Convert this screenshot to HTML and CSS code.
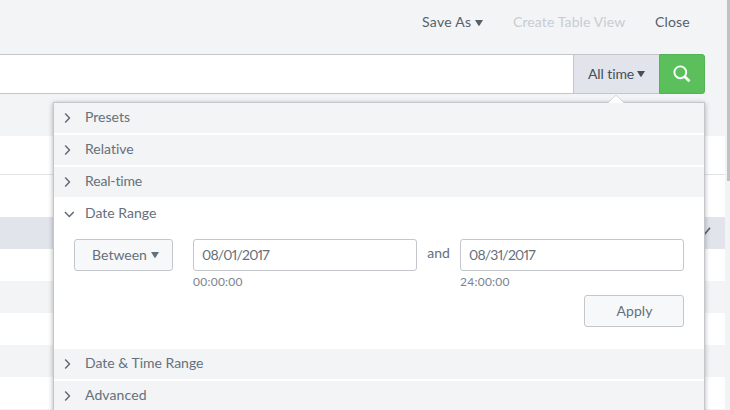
FILE: index.html
```html
<!DOCTYPE html>
<html lang="en">
<head>
<meta charset="utf-8">
<title>Search</title>
<link rel="stylesheet" href="styles.css">
</head>
<body>
<div class="page">
  <main class="content">
    <nav class="actions">
      <a class="save">Save As<svg class="caret" viewBox="0 0 8 6"><path d="M0 0h8L4.6 5.4q-.6.8-1.2 0z"/></svg></a>
      <a class="create">Create Table View</a>
      <a class="close">Close</a>
    </nav>
    <div class="search">
      <div class="query"></div>
      <div class="time">
        <span>All time</span><svg class="caret" viewBox="0 0 8 6"><path d="M0 0h8L4.6 5.4q-.6.8-1.2 0z"/></svg>
        <section class="popover">
          <svg class="tip" viewBox="0 0 16 8"><path d="M0 8L6.5 1.3q1.5-1.5 3 0L16 8" fill="#fff" stroke="#c3c7cc" stroke-width=".7"/></svg>
          <div class="head"><svg class="chev" viewBox="0 0 10 10"><path d="M1.2.5L5.5 5 1.2 9.5"/></svg><span>Presets</span></div>
          <div class="head"><svg class="chev" viewBox="0 0 10 10"><path d="M1.2.5L5.5 5 1.2 9.5"/></svg><span>Relative</span></div>
          <div class="head"><svg class="chev" viewBox="0 0 10 10"><path d="M1.2.5L5.5 5 1.2 9.5"/></svg><span class="realtime">Real-time</span></div>
          <div class="head open"><svg class="chev" viewBox="0 0 10 10"><path d="M.9 3L5.3 7.4 9.7 3"/></svg><span class="range">Date Range</span></div>
          <div class="body">
            <div class="fields">
              <div class="button between"><span>Between</span><svg class="caret" viewBox="0 0 8 6"><path d="M0 0h8L4.6 5.4q-.6.8-1.2 0z"/></svg></div>
              <div class="field"><div class="input">08/01/2017</div><div class="hint">00:00:00</div></div>
              <div class="and">and</div>
              <div class="field"><div class="input">08/31/2017</div><div class="hint">24:00:00</div></div>
            </div>
            <div class="button apply"><span>Apply</span></div>
          </div>
          <div class="head"><svg class="chev" viewBox="0 0 10 10"><path d="M1.2.5L5.5 5 1.2 9.5"/></svg><span class="datetime">Date &amp; Time Range</span></div>
          <div class="head"><svg class="chev" viewBox="0 0 10 10"><path d="M1.2.5L5.5 5 1.2 9.5"/></svg><span class="advanced">Advanced</span></div>
        </section>
      </div>
      <div class="go"><svg viewBox="0 0 18 18"><circle cx="7.3" cy="7.3" r="5.9"/><path d="M11.8 11.8l4.7 4.5" stroke-width="2.8"/></svg></div>
    </div>
    <div class="rows">
      <div class="row first"></div>
      <div class="row second"></div>
      <div class="row selected"><svg viewBox="0 0 10 10"><path d="M1 6L3.4 8.5 9 1.7"/></svg></div>
      <div class="row"></div>
      <div class="row alt"></div>
      <div class="row"></div>
      <div class="row alt"></div>
      <div class="row"></div>
      <div class="row alt"></div>
    </div>
  </main>
  <div class="scroll"><div class="thumb"></div></div>
</div>
</body>
</html>
```
FILE: styles.css
```css
* { box-sizing: border-box; }
body {
  margin: 0;
  background: #f2f4f5;
  color: #65707b;
  font: 14px/20px Lato, "Open Sans", sans-serif;
  font-variant-ligatures: none;
}
svg { display: block; flex: none; }
.page { display: flex; height: 410px; overflow: hidden; }
.content { width: 725px; }
.scroll { width: 5px; padding-left: 2px; background: #f2f3f4; }
.thumb { height: 181px; background: #c1c1c1; }
.caret { width: 8px; height: 6px; fill: currentColor; margin-left: 4px; }
.actions {
  display: flex;
  justify-content: flex-end;
  height: 54px;
  padding: 12px 35px 0 0;
  color: #56606b;
}
.save { display: flex; width: 91px; letter-spacing: .3px; }
.save .caret { margin-top: 8px; }
.create { width: 142px; color: #c8cdd1; letter-spacing: .12px; }
.close { width: 35px; letter-spacing: .15px; }
.search { display: flex; height: 40px; margin-right: 20px; }
.query { flex: 1; background: #fff; border: solid #c3c7cc; border-width: 1px 0; }
.time {
  position: relative;
  display: flex;
  align-items: center;
  width: 86px;
  padding-left: 14px;
  background: #e1e4ea;
  border: solid #c3c7cc;
  border-width: 1px 0 1px 1px;
  color: #464f59;
}
.time > span { letter-spacing: -.1px; }
.time > .caret { margin-left: 3px; }
.go {
  display: flex;
  align-items: center;
  justify-content: center;
  width: 46px;
  background: #5bc05c;
  border: 1px solid #54b355;
  border-radius: 0 3px 3px 0;
}
.go svg { width: 18px; height: 18px; fill: none; stroke: #fff; stroke-width: 1.9; }
.popover {
  position: absolute;
  z-index: 2;
  top: 47px;
  right: -46px;
  width: 652px;
  background: #fff;
  border: 1px solid #c3c7cc;
  box-shadow: 0 1px 5px rgba(0, 0, 0, .3);
  color: #65707b;
}
.tip { position: absolute; top: -8px; right: 80px; width: 16px; height: 8px; }
.head {
  display: flex;
  align-items: center;
  height: 30px;
  margin-bottom: 2px;
  padding-left: 10px;
  background: #f2f4f5;
}
.head span { padding-bottom: 2px; }
.head .advanced { letter-spacing: .1px; }
.head .realtime { letter-spacing: -.15px; }
.head.open { background: #fff; }
.chev {
  width: 10px;
  height: 10px;
  margin-right: 11px;
  fill: none;
  stroke: #5c6773;
  stroke-width: 1.4;
}
.body { height: 118px; padding: 8px 20px 0; }
.fields { display: flex; height: 56px; }
.button {
  display: flex;
  align-items: center;
  justify-content: center;
  height: 32px;
  background: #f7f8fa;
  border: 1px solid #c3c7cc;
  border-radius: 3px;
}
.between { width: 99px; margin-right: 20px; padding-left: 4px; }
.field { width: 224px; }
.input {
  height: 32px;
  padding: 5px 8px;
  border: 1px solid #c3c7cc;
  border-radius: 3px;
  font-variant-numeric: proportional-nums;
  letter-spacing: -.8px;
}
.hint { padding-top: 3px; font-size: 12px; line-height: 16px; letter-spacing: .25px; color: #7b848d; }
.and { width: 43px; padding-top: 4px; text-align: center; }
.apply { width: 100px; margin-left: auto; padding-left: 1px; letter-spacing: .1px; }
.row { height: 32px; background: #fff; }
.rows { padding-top: 42px; }
.row.first { height: 39px; border-bottom: 1px solid #e1e4e6; }
.row.second { height: 42px; }
.row.alt { background: #f2f4f5; }
.row.selected { display: flex; justify-content: flex-end; padding: 9px 14px 0 0; background: #e1e4ea; }
.selected svg { width: 10px; height: 10px; fill: none; stroke: #5c6773; stroke-width: 1.8; }
```
